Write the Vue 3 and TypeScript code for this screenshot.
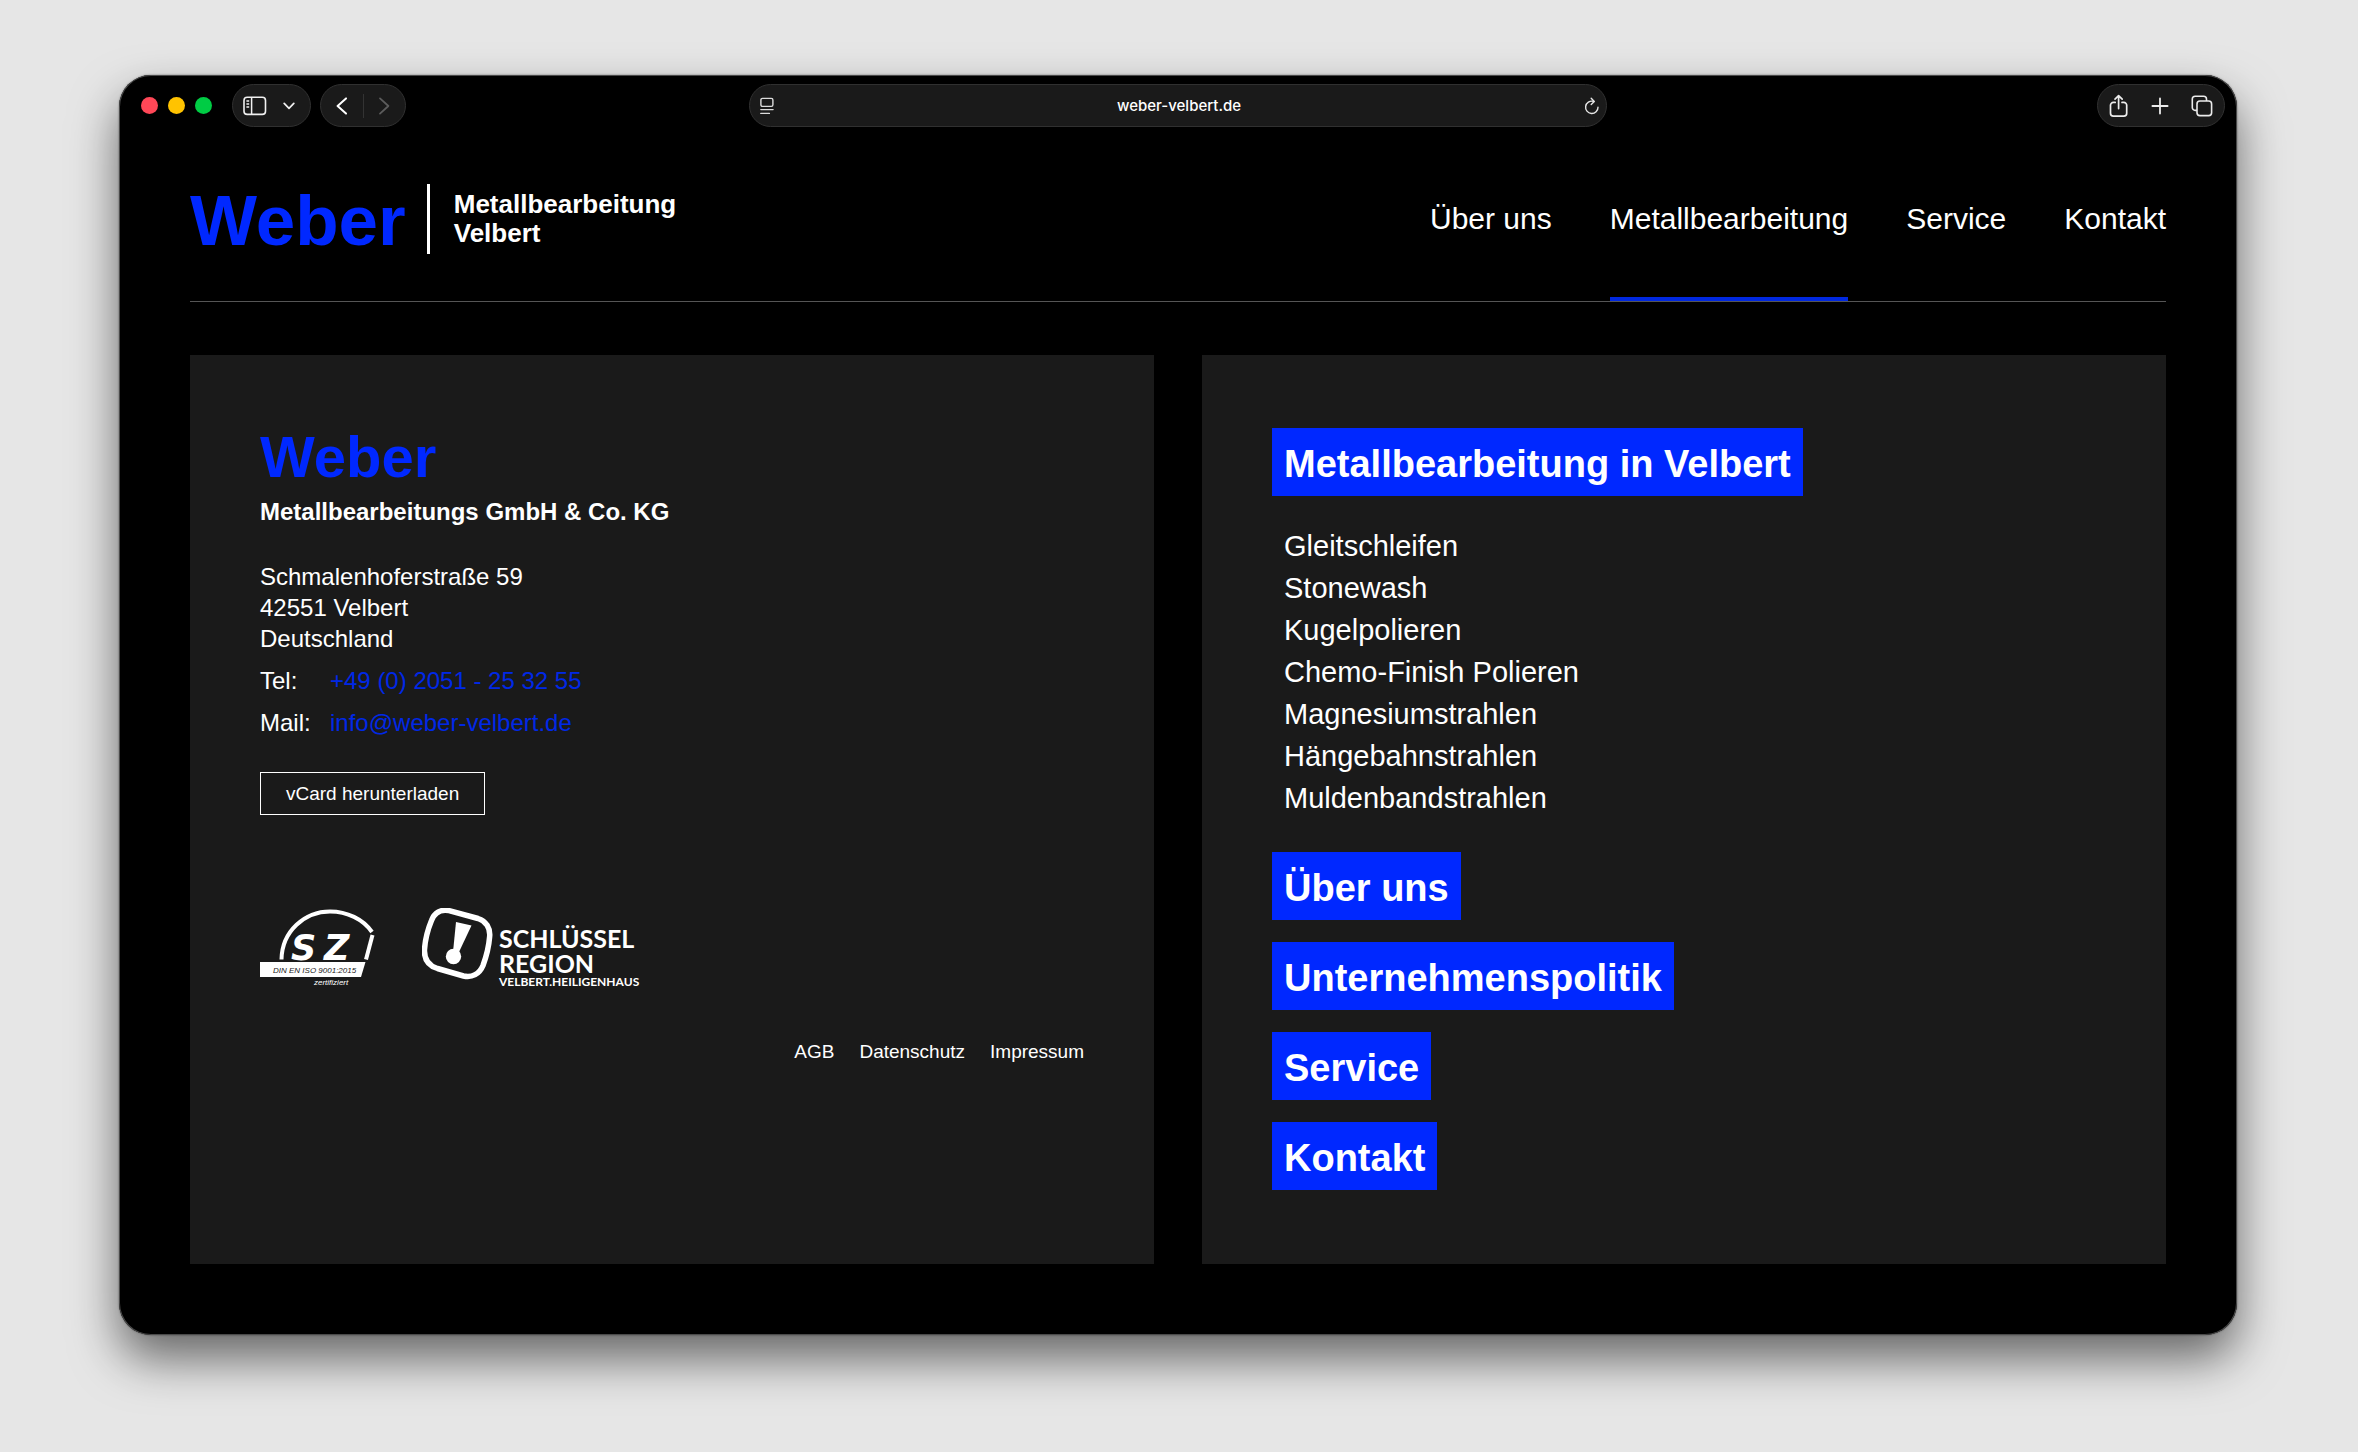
<script setup lang="ts">
import { ref } from 'vue'

interface NavItem {
  label: string
  active?: boolean
}

const address = ref('weber-velbert.de')

const nav: NavItem[] = [
  { label: 'Über uns' },
  { label: 'Metallbearbeitung', active: true },
  { label: 'Service' },
  { label: 'Kontakt' },
]

const services: string[] = [
  'Gleitschleifen',
  'Stonewash',
  'Kugelpolieren',
  'Chemo-Finish Polieren',
  'Magnesiumstrahlen',
  'Hängebahnstrahlen',
  'Muldenbandstrahlen',
]

const sections: string[] = ['Über uns', 'Unternehmenspolitik', 'Service', 'Kontakt']
const legal: string[] = ['AGB', 'Datenschutz', 'Impressum']
</script>

<template>
  <div class="desktop">
    <div class="window">
      <div class="toolbar">
        <div class="tools">
          <div class="lights">
            <span class="light red"></span>
            <span class="light yellow"></span>
            <span class="light green"></span>
          </div>
          <div class="pill sidebar-pill">
            <button type="button" aria-label="Seitenleiste">
              <svg width="24" height="20" viewBox="0 0 24 20" fill="none" stroke="#f0f0f0">
                <rect x="1" y="1.2" width="21.5" height="17.2" rx="3.2" stroke-width="1.6" />
                <path d="M8.6 1.2v17.2" stroke-width="1.5" />
                <path d="M3.4 5h2.8M3.4 8h2.8M3.4 11h2.8" stroke-width="1.3" />
              </svg>
            </button>
            <button type="button" aria-label="Tabgruppen">
              <svg width="12" height="8" viewBox="0 0 12 8" fill="none" stroke="#f0f0f0" stroke-width="1.7" stroke-linecap="round" stroke-linejoin="round">
                <path d="M1.2 1.4 6 6.3l4.8-4.9" />
              </svg>
            </button>
          </div>
          <div class="pill history-pill">
            <button type="button" aria-label="Zurück">
              <svg width="12" height="18" viewBox="0 0 12 18" fill="none" stroke="#fff" stroke-width="2" stroke-linecap="round" stroke-linejoin="round">
                <path d="M10 1.4 1.6 9l8.4 7.6" />
              </svg>
            </button>
            <span class="split"></span>
            <button type="button" aria-label="Vorwärts">
              <svg width="12" height="18" viewBox="0 0 12 18" fill="none" stroke="#5c5c5c" stroke-width="1.8" stroke-linecap="round" stroke-linejoin="round">
                <path d="M2 1.4 10.4 9 2 16.6" />
              </svg>
            </button>
          </div>
        </div>

        <div class="pill address-pill">
          <svg width="14" height="18" viewBox="0 0 14 18" fill="none" stroke="#dcdcdc" stroke-width="1.4" stroke-linecap="round">
            <rect x="0.9" y="1.4" width="12" height="8" rx="1.6" />
            <path d="M.8 12.6h12.3M.8 16.4h8.6" />
          </svg>
          <input v-model="address" type="text" aria-label="Adresse" />
          <button type="button" aria-label="Neu laden">
            <svg width="16" height="18" viewBox="0 0 16 18" fill="none" stroke="#e6e6e6" stroke-width="1.4" stroke-linecap="round" stroke-linejoin="round">
              <path d="M9.3 4.3A6.2 6.2 0 1 0 14 10.2" />
              <path d="M7.2 1.2 10.3 4.4 7.2 7.4" />
            </svg>
          </button>
        </div>

        <div class="tools tools-end">
          <div class="pill action-pill">
            <button type="button" aria-label="Teilen">
              <svg width="20" height="24" viewBox="0 0 20 24" fill="none" stroke="#ececec" stroke-width="1.7" stroke-linecap="round" stroke-linejoin="round">
                <path d="M6.2 8.4H4.4a2.9 2.9 0 0 0-2.9 2.9v7.9a2.9 2.9 0 0 0 2.9 2.9h10.4a2.9 2.9 0 0 0 2.9-2.9v-7.9a2.9 2.9 0 0 0-2.9-2.9H13" />
                <path d="M9.6 14.6V1.8M6 5.2l3.6-3.6 3.6 3.6" />
              </svg>
            </button>
            <button type="button" aria-label="Neuer Tab">
              <svg width="18" height="18" viewBox="0 0 18 18" fill="none" stroke="#ececec" stroke-width="1.8" stroke-linecap="round">
                <path d="M9 1.4v15.2M1.4 9h15.2" />
              </svg>
            </button>
            <button type="button" aria-label="Tabübersicht">
              <svg width="22" height="22" viewBox="0 0 22 22" fill="none" stroke="#ececec" stroke-width="1.6" stroke-linejoin="round">
                <path d="M6 15.4H4.2a2.9 2.9 0 0 1-2.9-2.9V4.1a2.9 2.9 0 0 1 2.9-2.9h8.4a2.9 2.9 0 0 1 2.9 2.9V6" />
                <rect x="6" y="6" width="14.6" height="14.6" rx="2.9" />
              </svg>
            </button>
          </div>
        </div>
      </div>

      <header class="header">
        <a class="brand" href="#">
          <span class="brand-name">Weber</span>
          <span class="brand-claim">Metallbearbeitung<br />Velbert</span>
        </a>
        <nav class="nav">
          <a v-for="item in nav" :key="item.label" href="#" :class="{ active: item.active }">{{ item.label }}</a>
        </nav>
      </header>

      <main class="cards">
        <section class="card">
          <h1 class="company">Weber</h1>
          <p class="legal-name">Metallbearbeitungs GmbH &amp; Co. KG</p>
          <address class="street">
            Schmalenhoferstraße 59<br />
            42551 Velbert<br />
            Deutschland
          </address>
          <dl class="contact">
            <dt>Tel:</dt>
            <dd><a href="#">+49 (0) 2051 - 25 32 55</a></dd>
            <dt>Mail:</dt>
            <dd><a href="#">info@weber-velbert.de</a></dd>
          </dl>
          <button class="vcard" type="button">vCard herunterladen</button>

          <div class="badges">
            <svg width="116" height="80" viewBox="0 0 116 80">
              <path d="M21.5 51.5C22 23 45 3.5 70 3.5c17 0 33 7.5 42 20.500" fill="none" stroke="#fff" stroke-width="4" />
              <path d="M112.500 27 106 51.500" fill="none" stroke="#fff" stroke-width="4" />
              <text x="31" y="52" class="sz">S</text>
              <text x="64" y="52" class="sz">Z</text>
              <path d="M0 54h105.500l-4.500 15H0z" fill="#fff" />
              <text x="13" y="65" class="norm">DIN EN ISO 9001:2015</text>
              <text x="54" y="77" class="cert">zertifiziert</text>
            </svg>
            <svg width="218" height="80" viewBox="0 0 218 80">
              <path
                d="M27 2.600 56 10.500C64 13 68.600 20 67.600 29 66.800 39 64.500 48 61 57.500 57.500 66 50 70 41.500 68L15.500 60.500C6 57.500 2 51 2.500 41.500 3.200 31 6 21 9.500 12.500 12.500 4.500 19 1 27 2.600Z"
                fill="none"
                stroke="#fff"
                stroke-width="5.500"
              />
              <path d="M34 14 49.500 17.500 37 44h-6z" fill="#fff" />
              <circle cx="31.500" cy="48.500" r="7.700" fill="#fff" />
              <text x="77" y="40" class="region">SCHLÜSSEL</text>
              <text x="77" y="65" class="region">REGION</text>
              <text x="77" y="78" class="towns">VELBERT.HEILIGENHAUS</text>
            </svg>
          </div>

          <footer class="legal">
            <a v-for="label in legal" :key="label" href="#">{{ label }}</a>
          </footer>
        </section>

        <section class="card">
          <a class="chip" href="#">Metallbearbeitung in Velbert</a>
          <ul class="services">
            <li v-for="service in services" :key="service"><a href="#">{{ service }}</a></li>
          </ul>
          <div class="sections">
            <a v-for="label in sections" :key="label" class="chip" href="#">{{ label }}</a>
          </div>
        </section>
      </main>
    </div>
  </div>
</template>

<style>
body {
  background: #e6e6e6;
}
</style>

<style scoped>
* {
  box-sizing: border-box;
}

.desktop {
  min-height: 100vh;
  padding: 75px 121px 117px 119px;
  overflow: hidden;
  background: #e6e6e6;
  color: #fff;
  font-family: 'Liberation Sans', Arial, sans-serif;
}

.window {
  border-radius: 32px;
  background: #000;
  box-shadow:
    inset 0 0 0 1px #4a4a4a,
    0 0 2px rgba(0, 0, 0, 0.5),
    0 24px 48px rgba(0, 0, 0, 0.55);
}

a {
  color: inherit;
  text-decoration: none;
}

button {
  display: flex;
  align-items: center;
  padding: 0;
  border: 0;
  background: none;
  color: inherit;
  font: inherit;
}

/* Browser toolbar */
.toolbar {
  display: grid;
  grid-template-columns: 1fr minmax(0, 858px) 1fr;
  height: 61px;
  padding-top: 9px;
  align-items: start;
}

.tools {
  display: flex;
  align-items: center;
  padding-left: 22px;
}

.tools-end {
  justify-content: flex-end;
  padding: 0 12px 0 0;
}

.lights {
  display: flex;
  gap: 10px;
  margin-right: 20px;
}

.light {
  width: 17px;
  height: 17px;
  border-radius: 50%;
}

.red {
  background: #ff4757;
}

.yellow {
  background: #ffc300;
}

.green {
  background: #00cc44;
}

.pill {
  display: flex;
  align-items: center;
  justify-content: space-between;
  height: 43px;
  border: 1px solid #303030;
  border-radius: 22px;
  background: #1a1a1a;
}

.sidebar-pill {
  width: 79px;
  margin-right: 9px;
  padding: 0 15px 0 10px;
}

.history-pill {
  width: 86px;
  padding: 0 15px;
}

.split {
  width: 1px;
  height: 24px;
  background: #333;
}

.address-pill {
  padding: 0 6px 0 10px;
}

.address-pill input {
  flex: 1;
  min-width: 0;
  padding: 0;
  border: 0;
  outline: 0;
  background: none;
  color: #fff;
  font: 500 15px/20px Inter, sans-serif;
  text-align: center;
}

.action-pill {
  width: 128px;
  padding: 0 11px;
}

/* Site header */
.header {
  display: flex;
  justify-content: space-between;
  height: 166px;
  margin: 0 71px;
  border-bottom: 1px solid #555;
}

.brand {
  display: flex;
  align-items: center;
  font-weight: 700;
}

.brand-name {
  margin-right: 21px;
  padding-top: 4px;
  color: #0028ff;
  font-size: 71px;
  line-height: 70px;
}

.brand-claim {
  padding: 6px 0 6px 24px;
  border-left: 3px solid #fff;
  font-size: 26px;
  line-height: 29px;
}

.nav {
  display: flex;
  gap: 58px;
  font-size: 30px;
}

.nav a {
  display: flex;
  align-items: center;
}

.nav .active {
  box-shadow: inset 0 -4px #0028e0;
}

/* Cards */
.cards {
  display: grid;
  grid-template-columns: 1fr 1fr;
  gap: 48px;
  padding: 53px 71px 71px;
}

.card {
  padding: 73px 70px 74px;
  background: #1a1a1a;
}

.company {
  margin: 0 0 10px;
  color: #0028ff;
  font-size: 58px;
  line-height: 58px;
}

.legal-name {
  margin: 0 0 33px;
  font-size: 24px;
  font-weight: 700;
  line-height: 32px;
}

.street {
  margin-bottom: 11px;
  font-size: 24px;
  font-style: normal;
  line-height: 31px;
}

.contact {
  display: grid;
  grid-template-columns: 70px 1fr;
  row-gap: 10px;
  margin: 0 0 33px;
  font-size: 24px;
  line-height: 32px;
}

.contact dd {
  margin: 0;
  color: #0028e6;
}

.vcard {
  height: 43px;
  padding: 0 25px;
  border: 1px solid #fff;
  font-size: 19px;
}

.badges {
  display: flex;
  gap: 46px;
  margin: 93px 0 50px;
}

.badges text {
  fill: #fff;
}

.badges .sz {
  font: italic 700 35px 'DejaVu Sans', sans-serif;
}

.badges .norm {
  fill: #1a1a1a;
  font: italic 8px 'Liberation Sans', sans-serif;
}

.badges .cert {
  font: italic 8px 'Liberation Sans', sans-serif;
}

.badges .region {
  font: 700 25px/24px Lato, sans-serif;
}

.badges .towns {
  font: 700 12px Lato, sans-serif;
}

.legal {
  display: flex;
  justify-content: flex-end;
  gap: 25px;
  font-size: 19px;
  line-height: 28px;
}

.chip {
  display: block;
  width: fit-content;
  padding: 4px 12px 0;
  background: #0028ff;
  font-size: 38px;
  font-weight: 700;
  line-height: 64px;
}

.services {
  margin: 29px 0 33px;
  padding: 0 12px;
  list-style: none;
  font-size: 29px;
  line-height: 42px;
}

.sections {
  display: grid;
  gap: 22px;
}
</style>
